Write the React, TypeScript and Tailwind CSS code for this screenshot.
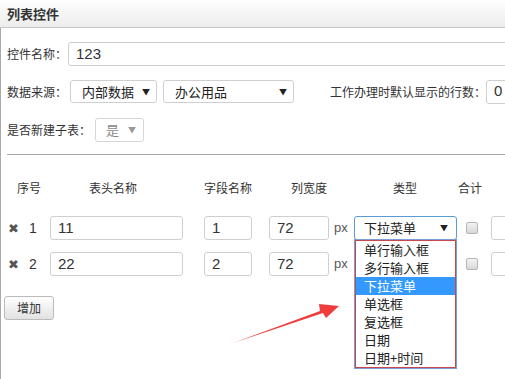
import React from "react";

const font = { fontFamily: '"Noto Sans CJK SC", "Liberation Sans", sans-serif' };

const types = ["单行输入框", "多行输入框", "下拉菜单", "单选框", "复选框", "日期", "日期+时间"];

function Caret({ muted }: { muted?: boolean }) {
  return <span className={`text-[8px] leading-none ${muted ? "text-[#999]" : "text-[#222]"}`}>▼</span>;
}

function TextBox({ value, className }: { value: string; className: string }) {
  return (
    <div
      className={`shrink-0 h-[24px] flex items-center px-[7px] border border-[#cfcfcf] rounded-[3px] bg-white text-[15px] text-[#333] font-['Liberation_Sans'] ${className}`}
    >
      {value}
    </div>
  );
}

function CheckBox() {
  return (
    <div className="w-[12px] h-[12px] rounded-[2px] border border-[#b5b5b5] bg-gradient-to-b from-[#f2f2f2] to-[#d8d8d8]" />
  );
}

function Row({ n, name, field, open }: { n: string; name: string; field: string; open?: boolean }) {
  return (
    <div className="flex items-center h-[24px] whitespace-nowrap">
      <div className="shrink-0 w-[49px] flex items-center">
        <span className="ml-[7px] text-[13px] text-[#555]">✖</span>
        <span className="ml-[10px] text-[14px] text-[#333] font-['Liberation_Sans']">{n}</span>
      </div>
      <TextBox value={name} className="w-[133px]" />
      <TextBox value={field} className="w-[48px] ml-[21px]" />
      <TextBox value="72" className="w-[60px] ml-[17px]" />
      <span className="shrink-0 ml-[5px] w-[14px] text-[13px] text-[#555] font-['Liberation_Sans']">px</span>
      <div className="shrink-0 relative ml-[6px]">
        <div
          className={`w-[103px] h-[24px] flex items-center justify-between pl-[9px] pr-[8px] rounded-[3px] border bg-white text-[13px] text-[#222] ${
            open ? "border-[#5b9bd5]" : "border-[#cfcfcf]"
          }`}
        >
          {open && "下拉菜单"}
          {open && <Caret />}
        </div>
        {open && (
          <div className="absolute left-0 top-[23px] w-[103px] z-10 border border-[#7a9fd6] bg-white">
            <div className="border border-[#c9474a]">
              {types.map((t) => (
                <div
                  key={t}
                  className={`h-[18px] leading-[18px] pl-[8px] text-[13px] ${
                    t === "下拉菜单" ? "bg-[#3399ff] text-white" : "text-[#222]"
                  }`}
                >
                  {t}
                </div>
              ))}
            </div>
          </div>
        )}
      </div>
      <div className="shrink-0 ml-[9px]">
        <CheckBox />
      </div>
      <div className="shrink-0 ml-[13px] w-[40px] h-[24px] border border-[#cfcfcf] rounded-[3px] bg-white" />
    </div>
  );
}

export default function App() {
  return (
    <div className="w-[505px] h-[379px] overflow-hidden bg-white relative" style={font}>
      {/* title bar */}
      <div className="h-[28px] flex items-center px-[7px] bg-gradient-to-b from-white to-[#ececec] border-b border-[#c6c6c6]">
        <span className="text-[13px] font-bold text-[#333]">列表控件</span>
      </div>

      <div className="border-l border-[#a9a9a9] h-[351px] pl-[6px] text-[12px] text-[#333] whitespace-nowrap">
        {/* 控件名称 */}
        <div className="pt-[14px] flex items-center h-[38px]">
          <span className="shrink-0 w-[61px]">控件名称：</span>
          <TextBox value="123" className="w-[460px]" />
        </div>

        {/* 数据来源 */}
        <div className="mt-[14px] flex items-center h-[23px]">
          <span className="shrink-0 w-[63px]">数据来源：</span>
          <div className="shrink-0 w-[87px] h-[23px] flex items-center justify-between pl-[11px] pr-[6px] border border-[#cfcfcf] rounded-[3px] text-[13px] text-[#222]">
            内部数据
            <Caret />
          </div>
          <div className="shrink-0 ml-[6px] w-[131px] h-[23px] flex items-center justify-between pl-[11px] pr-[6px] border border-[#cfcfcf] rounded-[3px] text-[13px] text-[#222]">
            办公用品
            <Caret />
          </div>
          <span className="shrink-0 ml-[36px]">工作办理时默认显示的行数：</span>
          <TextBox value="0" className="w-[40px]" />
        </div>

        {/* 是否新建子表 */}
        <div className="mt-[15px] flex items-center h-[24px]">
          <span className="shrink-0 w-[88px]">是否新建子表：</span>
          <div className="shrink-0 w-[49px] h-[24px] flex items-center justify-between pl-[10px] pr-[7px] border border-[#d6d6d6] rounded-[3px] text-[13px] text-[#888]">
            是
            <Caret muted />
          </div>
        </div>

        <div className="mt-[12px] border-t border-[#a8a8a8] mr-[-10px]" />

        {/* table header */}
        <div className="mt-[24px] flex items-center h-[18px] -ml-[6px]">
          <span className="shrink-0 ml-[16px]">序号</span>
          <span className="shrink-0 ml-[48px]">表头名称</span>
          <span className="shrink-0 ml-[67px]">字段名称</span>
          <span className="shrink-0 ml-[39px]">列宽度</span>
          <span className="shrink-0 ml-[66px]">类型</span>
          <span className="shrink-0 ml-[41px]">合计</span>
        </div>

        <div className="-ml-[6px] mt-[19px] flex flex-col gap-[12px]">
          <Row n="1" name="11" field="1" open />
          <Row n="2" name="22" field="2" />
        </div>

        <button className="mt-[20px] -ml-[3px] w-[50px] h-[24px] rounded-[3px] border border-[#bbb] bg-gradient-to-b from-white to-[#e2e2e2] text-[12px] text-[#333]">
          增加
        </button>
      </div>

      {/* annotation arrow */}
      <svg className="absolute left-0 top-0 pointer-events-none" width="505" height="379">
        <path d="M233 343 L320 311 L319 304 L339 306 L326 318 L323 313 Z" fill="#f03c3c" />
      </svg>
    </div>
  );
}
